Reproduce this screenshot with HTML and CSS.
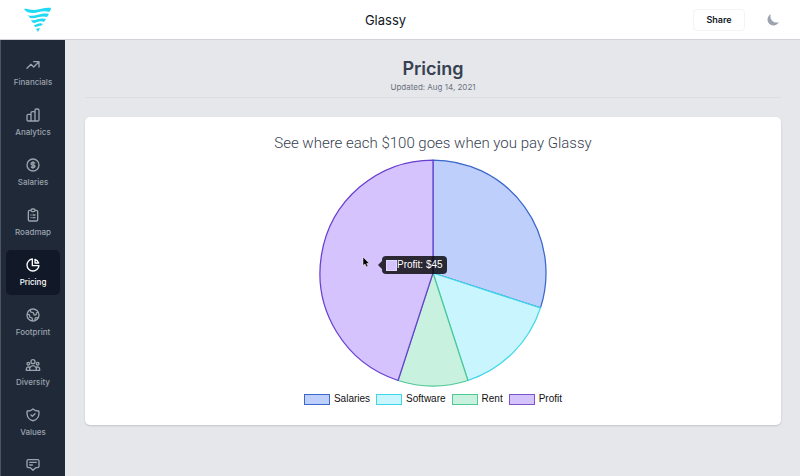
FILE: index.html
```html
<!DOCTYPE html>
<html lang="en">
<head>
<meta charset="utf-8">
<meta name="viewport" content="width=device-width, initial-scale=1">
<title>Glassy</title>
<link rel="stylesheet" href="styles.css">
</head>
<body>
<header class="topbar">
  <a class="logo" href="#" aria-label="Home">
    <svg viewBox="0 0 28 26" width="28" height="26" aria-hidden="true">
      <path d="M0 2C3 1 6 3 10 3C16 3 21 0 27 1C27 3 26 4 25 5C19 3 14 6 9 6C5 6 2 5 0 2Z"/>
      <path d="M4 8C9 11 17 5 25 7L23 10C18 8 12 12 6 11Z"/>
      <path d="M7 13C12 14 16 10 22 12L20 15C16 13 13 16 9 16Z"/>
      <path d="M10 18C13 18 15 15 19 17L17 19C15 18 14 20 11 20Z"/>
      <path d="M12 22C13 22 14 21 16 21L14 25Z"/>
    </svg>
  </a>
  <div class="brand">Glassy</div>
  <div class="actions">
    <button class="share" type="button">Share</button>
    <button class="theme" type="button" aria-label="Toggle dark mode">
      <svg viewBox="0 0 20 20" width="15" height="15" aria-hidden="true"><path d="M17.293 13.293A8 8 0 016.707 2.707a8.001 8.001 0 1010.586 10.586z"/></svg>
    </button>
  </div>
</header>
<div class="shell">
  <nav class="sidebar" aria-label="Main">
    <a href="#"><svg viewBox="0 0 24 24"><path d="M13 7h8m0 0v8m0-8l-8 8-4-4-6 6"/></svg>Financials</a>
    <a href="#"><svg viewBox="0 0 24 24"><path d="M9 19v-6a2 2 0 00-2-2H5a2 2 0 00-2 2v6a2 2 0 002 2h2a2 2 0 002-2zm0 0V9a2 2 0 012-2h2a2 2 0 012 2v10m-6 0a2 2 0 002 2h2a2 2 0 002-2m0 0V5a2 2 0 012-2h2a2 2 0 012 2v14a2 2 0 01-2 2h-2a2 2 0 01-2-2z"/></svg>Analytics</a>
    <a href="#"><svg viewBox="0 0 24 24"><path d="M12 8c-1.657 0-3 .895-3 2s1.343 2 3 2 3 .895 3 2-1.343 2-3 2m0-8c1.11 0 2.08.402 2.599 1M12 8V7m0 1v8m0 0v1m0-1c-1.11 0-2.08-.402-2.599-1M21 12a9 9 0 11-18 0 9 9 0 0118 0z"/></svg>Salaries</a>
    <a href="#"><svg viewBox="0 0 24 24"><path d="M9 5H7a2 2 0 00-2 2v12a2 2 0 002 2h10a2 2 0 002-2V7a2 2 0 00-2-2h-2M9 5a2 2 0 002 2h2a2 2 0 002-2M9 5a2 2 0 012-2h2a2 2 0 012 2m-3 7h3m-3 4h3m-6-4h.01M9 16h.01"/></svg>Roadmap</a>
    <a class="active" href="#" aria-current="page"><svg viewBox="0 0 24 24"><path d="M11 3.055A9.001 9.001 0 1020.945 13H11V3.055z"/><path d="M20.488 9H15V3.512A9.025 9.025 0 0120.488 9z"/></svg>Pricing</a>
    <a href="#"><svg viewBox="0 0 24 24"><path d="M3.055 11H5a2 2 0 012 2v1a2 2 0 002 2 2 2 0 012 2v2.945M8 3.935V5.5A2.5 2.5 0 0010.5 8h.5a2 2 0 012 2 2 2 0 104 0 2 2 0 012-2h1.064M15 20.488V18a2 2 0 012-2h3.064M21 12a9 9 0 11-18 0 9 9 0 0118 0z"/></svg>Footprint</a>
    <a href="#"><svg viewBox="0 0 24 24"><path d="M17 20h5v-2a3 3 0 00-5.356-1.857M17 20H7m10 0v-2c0-.656-.126-1.283-.356-1.857M7 20H2v-2a3 3 0 015.356-1.857M7 20v-2c0-.656.126-1.283.356-1.857m0 0a5.002 5.002 0 019.288 0M15 7a3 3 0 11-6 0 3 3 0 016 0zm6 3a2 2 0 11-4 0 2 2 0 014 0zM7 10a2 2 0 11-4 0 2 2 0 014 0z"/></svg>Diversity</a>
    <a href="#"><svg viewBox="0 0 24 24"><path d="M9 12l2 2 4-4m5.618-4.016A11.955 11.955 0 0112 2.944a11.955 11.955 0 01-8.618 3.04A12.02 12.02 0 003 9c0 5.591 3.824 10.29 9 11.622 5.176-1.332 9-6.03 9-11.622 0-1.042-.133-2.052-.382-3.016z"/></svg>Values</a>
    <a href="#" aria-label="Feedback"><svg viewBox="0 0 24 24"><path d="M7 8h10M7 12h4m1 8l-4-4H5a2 2 0 01-2-2V6a2 2 0 012-2h14a2 2 0 012 2v8a2 2 0 01-2 2h-3l-4 4z"/></svg></a>
  </nav>
  <main class="content">
    <div class="page-head">
      <h1>Pricing</h1>
      <p>Updated: Aug 14, 2021</p>
    </div>
    <section class="card">
      <h2>See where each $100 goes when you pay Glassy</h2>
      <div class="chart">
        <svg class="pie" viewBox="-115 -115 230 230" role="img" aria-label="Breakdown of each $100">
          <path class="salaries" d="M0 0V-113A113 113 0 0 1 107.47 34.92Z"/>
          <path class="software" d="M0 0L107.47 34.92A113 113 0 0 1 34.92 107.47Z"/>
          <path class="rent" d="M0 0L34.92 107.47A113 113 0 0 1 -34.92 107.47Z"/>
          <path class="profit" d="M0 0L-34.92 107.47A113 113 0 0 1 0 -113Z"/>
        </svg>
        <div class="tooltip"><span class="swatch"></span>Profit: $45</div>
        <svg class="cursor" viewBox="0 0 8 12" width="8" height="12" aria-hidden="true"><path d="M1 1V9.500L3 8L4.500 11L6 10.300L4.700 7.500H7.300Z"/></svg>
      </div>
      <ul class="legend">
        <li><span class="key salaries"></span>Salaries</li>
        <li><span class="key software"></span>Software</li>
        <li><span class="key rent"></span>Rent</li>
        <li><span class="key profit"></span>Profit</li>
      </ul>
    </section>
  </main>
</div>
</body>
</html>
```
FILE: styles.css
```css
* {
  box-sizing: border-box;
}

body {
  margin: 0;
  height: 100vh;
  display: flex;
  flex-direction: column;
  overflow: hidden;
  background: #e5e7eb;
  font-family: Inter, "Liberation Sans", sans-serif;
}

h1,
h2,
p,
ul {
  margin: 0;
  padding: 0;
}

button {
  font: inherit;
  padding: 0;
  border: 0;
  background: none;
}

svg {
  display: block;
}

.topbar {
  flex: none;
  display: grid;
  grid-template-columns: 1fr auto 1fr;
  align-items: center;
  height: 40px;
  padding: 0 19px 0 24px;
  background: #fff;
  border-bottom: 1px solid #d1d3d8;
}

.logo {
  justify-self: start;
  fill: #22d9f5;
}

.brand {
  padding-right: 34px;
  font-size: 13px;
  line-height: 20px;
  color: #111827;
}

.actions {
  justify-self: end;
  display: flex;
  align-items: center;
  gap: 21px;
}

.share {
  width: 52px;
  height: 22px;
  border: 1px solid #f3f4f6;
  border-radius: 4px;
  font-size: 9px;
  font-weight: 600;
  color: #111827;
}

.theme {
  fill: #9ca3af;
}

.shell {
  flex: 1;
  display: flex;
  min-height: 0;
}

.sidebar {
  flex: none;
  width: 65px;
  display: flex;
  flex-direction: column;
  gap: 5px;
  padding: 10px 5px 0;
  overflow: hidden;
  background: #1f2937;
  border-left: 1px solid #4b5563;
}

.sidebar a {
  flex: none;
  display: flex;
  flex-direction: column;
  align-items: center;
  gap: 3px;
  height: 45px;
  padding-top: 7px;
  border-radius: 5px;
  font-size: 8px;
  font-weight: 500;
  line-height: 12px;
  color: #9ca3af;
  text-decoration: none;
}

.sidebar svg {
  width: 16px;
  height: 16px;
  fill: none;
  stroke: currentColor;
  stroke-width: 2;
  stroke-linecap: round;
  stroke-linejoin: round;
}

.sidebar .active {
  background: #111827;
  color: #fff;
}

.content {
  flex: 1;
  padding: 17px 19px 0 20px;
}

.page-head {
  padding-bottom: 4px;
  border-bottom: 1px solid #dbdde1;
  text-align: center;
}

h1 {
  font-size: 18px;
  font-weight: 600;
  line-height: 24px;
  color: #374151;
}

.page-head p {
  font-size: 8px;
  line-height: 12px;
  color: #6b7280;
}

.card {
  display: flex;
  flex-direction: column;
  align-items: center;
  margin-top: 19px;
  padding: 16px 16px 19px;
  border-radius: 5px;
  background: #fff;
  box-shadow: 0 1px 2px #00000026;
}

h2 {
  font-family: Roboto, "Liberation Sans", sans-serif;
  font-size: 15px;
  font-weight: 300;
  line-height: 20px;
  color: #374151;
}

.chart {
  position: relative;
  margin-top: 5px;
}

.pie {
  width: 230px;
  height: 230px;
}

.pie path {
  stroke-width: 1.25;
  stroke-linejoin: round;
}

.salaries {
  fill: #bfcffc;
  stroke: #3b68cb;
  background: #bfcffc;
  border-color: #3b68cb;
}

.software {
  fill: #c8f5fe;
  stroke: #3fd6ea;
  background: #c8f5fe;
  border-color: #3fd6ea;
}

.rent {
  fill: #c8f2df;
  stroke: #4fc994;
  background: #c8f2df;
  border-color: #4fc994;
}

.profit {
  fill: #d5c3fe;
  stroke: #693ecf;
  background: #d5c3fe;
  border-color: #7d55c9;
}

.tooltip {
  position: absolute;
  left: 64px;
  top: 98px;
  display: flex;
  align-items: center;
  height: 18px;
  padding: 0 4px;
  border-radius: 4px;
  background: #000000cc;
  font-family: "Liberation Sans", sans-serif;
  font-size: 10px;
  line-height: 12px;
  white-space: nowrap;
  color: #fff;
}

.tooltip::before {
  content: "";
  position: absolute;
  right: 100%;
  border: 4px solid transparent;
  border-left: 0;
  border-right-color: #000000cc;
}

.swatch {
  width: 11px;
  height: 11px;
  border: 1px solid #e4daff;
  background: #d5c3fe;
}

.cursor {
  position: absolute;
  left: 44px;
  top: 98px;
  fill: #000;
  stroke: #fff;
  stroke-width: 0.5;
}

.legend {
  display: flex;
  gap: 6px;
  margin-top: 4px;
  list-style: none;
  font-family: "Liberation Sans", sans-serif;
  font-size: 10px;
  line-height: 14px;
  color: #111;
}

.legend li {
  display: flex;
  align-items: center;
  gap: 4px;
}

.key {
  width: 26px;
  height: 11px;
  border-width: 1px;
  border-style: solid;
}
```
